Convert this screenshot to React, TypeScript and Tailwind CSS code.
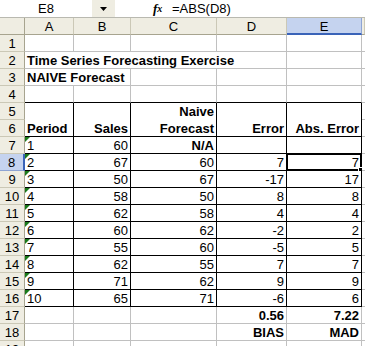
import React from 'react';

type Cell = { t?: string; al?: 'l' | 'r'; b?: boolean; span?: number; tri?: boolean; sel?: boolean };

const blank = (n: number): Cell[] => Array.from({ length: n }, () => ({}));

const dataRows: [string, string, string, string, string][] = [
  ['2', '67', '60', '7', '7'],
  ['3', '50', '67', '-17', '17'],
  ['4', '58', '50', '8', '8'],
  ['5', '62', '58', '4', '4'],
  ['6', '60', '62', '-2', '2'],
  ['7', '55', '60', '-5', '5'],
  ['8', '62', '55', '7', '7'],
  ['9', '71', '62', '9', '9'],
  ['10', '65', '71', '-6', '6'],
];

const rows: Cell[][] = [];
rows[1] = blank(6);
rows[2] = [{ t: 'Time Series Forecasting Exercise', al: 'l', b: true, span: 4 }, {}, {}];
rows[3] = [{ t: 'NAIVE Forecast', al: 'l', b: true, span: 2 }, {}, {}, {}, {}];
rows[4] = blank(6);
rows[5] = [{}, {}, { t: 'Naive', al: 'r', b: true }, {}, {}, {}];
rows[6] = [
  { t: 'Period', al: 'l', b: true },
  { t: 'Sales', al: 'r', b: true },
  { t: 'Forecast', al: 'r', b: true },
  { t: 'Error', al: 'r', b: true },
  { t: 'Abs. Error', al: 'r', b: true },
  {},
];
rows[7] = [{ t: '1', al: 'l', tri: true }, { t: '60', al: 'r' }, { t: 'N/A', al: 'r', b: true }, {}, {}, {}];
dataRows.forEach((d, i) => {
  rows[8 + i] = [
    { t: d[0], al: 'l', tri: true },
    { t: d[1], al: 'r' },
    { t: d[2], al: 'r' },
    { t: d[3], al: 'r' },
    { t: d[4], al: 'r', sel: i === 0 },
    {},
  ];
});
rows[17] = [{}, {}, {}, { t: '0.56', al: 'r', b: true }, { t: '7.22', al: 'r', b: true }, {}];
rows[18] = [{}, {}, {}, { t: 'BIAS', al: 'r', b: true }, { t: 'MAD', al: 'r', b: true }, {}];
rows[19] = blank(6);

const spanCls: Record<number, string> = { 1: '', 2: 'col-span-2', 3: 'col-span-3', 4: 'col-span-4' };

function DataCell({ c, r, colStart }: { c: Cell; r: number; colStart: number }) {
  const span = c.span ?? 1;
  const colEnd = colStart + span - 1;
  const tableCols = colEnd <= 5;
  const inTable = r >= 5 && r <= 16 && tableCols;
  const right = inTable ? 'border-r border-r-black' : 'border-r border-r-[#c0c0c0]';
  let bottom = 'border-b border-b-[#c0c0c0]';
  if (r === 4 && tableCols) bottom = 'border-b border-b-black';
  else if (inTable && r === 5) bottom = '';
  else if (inTable) bottom = 'border-b border-b-black';
  const align = c.al === 'r' ? 'justify-end' : 'justify-start';
  return (
    <div
      className={`relative flex h-[17px] ${align} overflow-visible whitespace-nowrap bg-white px-[2px] pt-[1px] leading-[15px] ${right} ${bottom} ${spanCls[span]} ${c.b ? 'font-bold' : ''}`}
    >
      {c.tri && (
        <svg className="absolute left-0 top-0" width="6" height="6" viewBox="0 0 6 6">
          <polygon points="0,0 5,0 0,5" fill="#1a7a1a" />
        </svg>
      )}
      <span>{c.t ?? ''}</span>
      {c.sel && (
        <>
          <div className="pointer-events-none absolute -left-[1px] -top-[1px] -right-[1px] -bottom-[1px] border-2 border-black" />
          <div className="absolute -bottom-[3px] -right-[3px] h-[6px] w-[6px] border border-white bg-black" />
        </>
      )}
    </div>
  );
}

export default function App() {
  const colLetters = ['A', 'B', 'C', 'D', 'E', ''];
  return (
    <div className="h-[346px] w-[365px] overflow-hidden bg-white font-['Liberation_Sans',Arial,sans-serif] text-[13px] text-black">
      {/* formula bar */}
      <div className="flex h-[18px] items-stretch border-b border-b-[#b9b9b0] bg-white">
        <div className="flex w-[92px] items-center justify-center leading-none">E8</div>
        <div className="flex w-[23px] items-center justify-center bg-[#efede2]">
          <svg width="7" height="4" viewBox="0 0 7 4">
            <polygon points="0,0 7,0 3.5,4" fill="#000" />
          </svg>
        </div>
        <div className="w-[38px]" />
        <div className="flex w-[18px] items-center font-['Liberation_Serif',serif] text-[13px] font-bold italic leading-none">
          f<span className="text-[10px]">x</span>
        </div>
        <div className="flex items-center pl-[1px] leading-none">=ABS(D8)</div>
      </div>
      {/* grid */}
      <div className="grid grid-cols-[25px_49px_57px_86px_70px_75px_3px]">
        {/* column header row */}
        <div className="h-[17px] border-b border-r border-b-[#a7a48f] border-r-[#a7a48f] bg-[#efede2]" />
        {colLetters.map((l, i) => (
          <div
            key={l + i}
            className={`flex h-[17px] items-start justify-center pt-[1px] leading-[15px] ${
              l === 'E'
                ? 'border-b-2 border-r border-b-[#3a63b8] border-r-[#8ea4d4] bg-[#c5d3ef]'
                : 'border-b border-r border-b-[#a7a48f] border-r-[#cbc8b6] bg-[#efede2]'
            }`}
          >
            {l}
          </div>
        ))}
        {Array.from({ length: 19 }, (_, k) => k + 1).map((r) => {
          let col = 1;
          const cells = rows[r].map((c, i) => {
            const el = <DataCell key={i} c={c} r={r} colStart={col} />;
            col += c.span ?? 1;
            return el;
          });
          return (
            <React.Fragment key={r}>
              <div
                className={`flex h-[17px] items-start justify-center pt-[1px] leading-[15px] ${
                  r === 8
                    ? 'border-b border-r-2 border-b-[#8ea4d4] border-r-[#3a63b8] bg-[#c5d3ef]'
                    : 'border-b border-r border-b-[#cbc8b6] border-r-[#a7a48f] bg-[#efede2]'
                }`}
              >
                {r}
              </div>
              {cells}
            </React.Fragment>
          );
        })}
      </div>
    </div>
  );
}
